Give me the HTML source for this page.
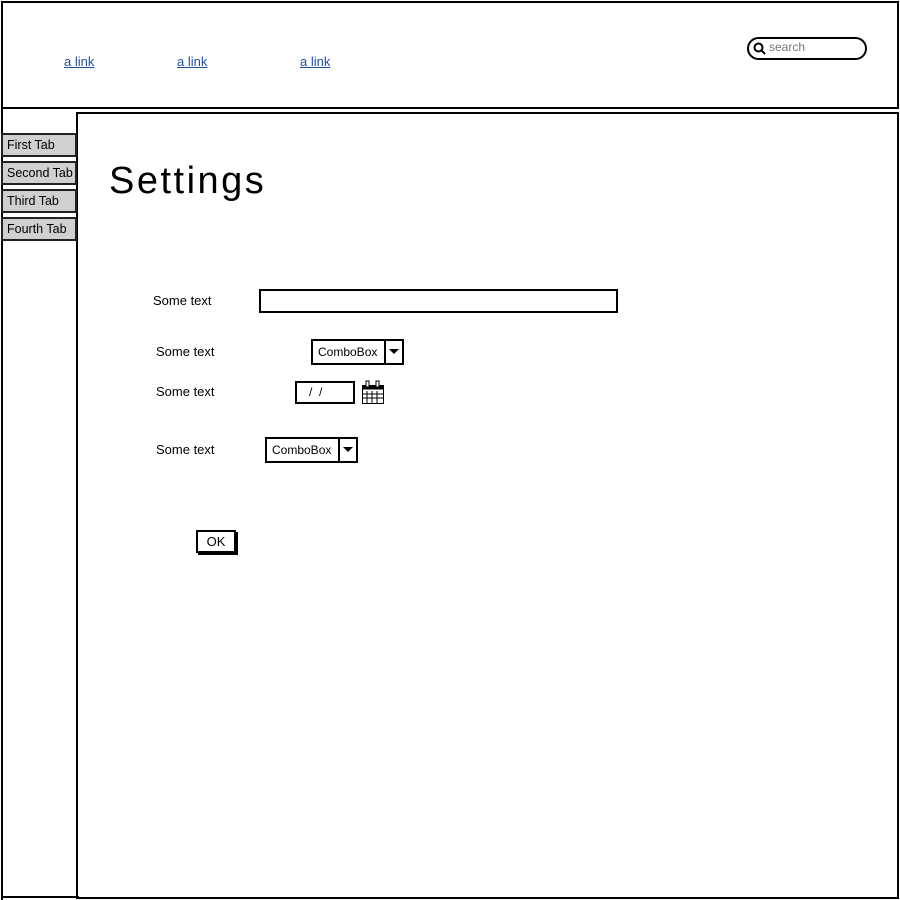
<!DOCTYPE html>
<html><head><style>
body{margin:0;width:900px;height:900px;position:relative;background:#fff;font-family:"Liberation Sans",sans-serif;overflow:hidden}
.a{position:absolute}
.b{border:2px solid #000;box-sizing:border-box}
a{color:#1f4e9f;font-size:13px;text-decoration:underline}
.lbl{font-size:13px;color:#000}
.tab{position:absolute;left:1px;width:76px;height:24px;background:#d0d0d0;border:2px solid #222;box-sizing:border-box;font-size:12.5px;padding:3px 0 0 4px}
.cb{position:absolute;height:26px;border:2px solid #000;box-sizing:border-box;font-size:12px;background:#fff}
.cb span{position:absolute;left:5px;top:4px}
.cb i{position:absolute;right:0;top:0;width:16px;height:22px;border-left:2px solid #000}
.cb i:after{content:"";position:absolute;left:3px;top:8px;border-left:5px solid transparent;border-right:5px solid transparent;border-top:5px solid #000}
</style></head><body>
<div class="a b" style="left:1px;top:1px;width:898px;height:108px"></div>
<a class="a" style="left:64px;top:54px">a link</a>
<a class="a" style="left:177px;top:54px">a link</a>
<a class="a" style="left:300px;top:54px">a link</a>
<div class="a b" style="left:747px;top:37px;width:120px;height:23px;border-radius:12px"></div>
<svg class="a" style="left:753px;top:42px" width="14" height="14"><circle cx="5.5" cy="5.5" r="4" fill="none" stroke="#000" stroke-width="2"/><line x1="8.5" y1="8.5" x2="12" y2="12" stroke="#000" stroke-width="2"/></svg>
<div class="a" style="left:769px;top:40px;font-size:12px;color:#777">search</div>
<div class="a" style="left:1px;top:108px;width:2px;height:792px;background:#000"></div>
<div class="a b" style="left:76px;top:112px;width:823px;height:787px"></div>
<div class="a" style="left:1px;top:896px;width:78px;height:2px;background:#000"></div>
<div class="tab" style="top:133px">First Tab</div>
<div class="tab" style="top:161px">Second Tab</div>
<div class="tab" style="top:189px">Third Tab</div>
<div class="tab" style="top:217px">Fourth Tab</div>
<div class="a" style="left:109px;top:160px;font-size:38px;letter-spacing:2.5px">Settings</div>
<div class="a lbl" style="left:153px;top:293px">Some text</div>
<div class="a b" style="left:259px;top:289px;width:359px;height:24px"></div>
<div class="a lbl" style="left:156px;top:344px">Some text</div>
<div class="cb" style="left:311px;top:339px;width:93px"><span>ComboBox</span><i></i></div>
<div class="a lbl" style="left:156px;top:384px">Some text</div>
<div class="a b" style="left:295px;top:381px;width:60px;height:23px;font-size:12px;padding:2px 0 0 12px">/ &nbsp;/</div>
<svg class="a" style="left:361px;top:380px" width="24" height="25"><rect x="1.5" y="5.5" width="21" height="18" fill="#fff" stroke="#000"/><rect x="1.5" y="5.5" width="21" height="4" fill="#000"/><path d="M6 11v12M11 11v12M16 11v12M2 14h20M2 18h20" stroke="#000"/><rect x="5" y="1" width="3" height="6" fill="#fff" stroke="#000"/><rect x="15" y="1" width="3" height="6" fill="#fff" stroke="#000"/></svg>
<div class="a lbl" style="left:156px;top:442px">Some text</div>
<div class="cb" style="left:265px;top:437px;width:93px"><span>ComboBox</span><i></i></div>
<div class="a b" style="left:196px;top:530px;width:40px;height:23px;font-size:13px;text-align:center;padding-top:2px;box-shadow:2px 2px 0 #000">OK</div>
</body></html>
